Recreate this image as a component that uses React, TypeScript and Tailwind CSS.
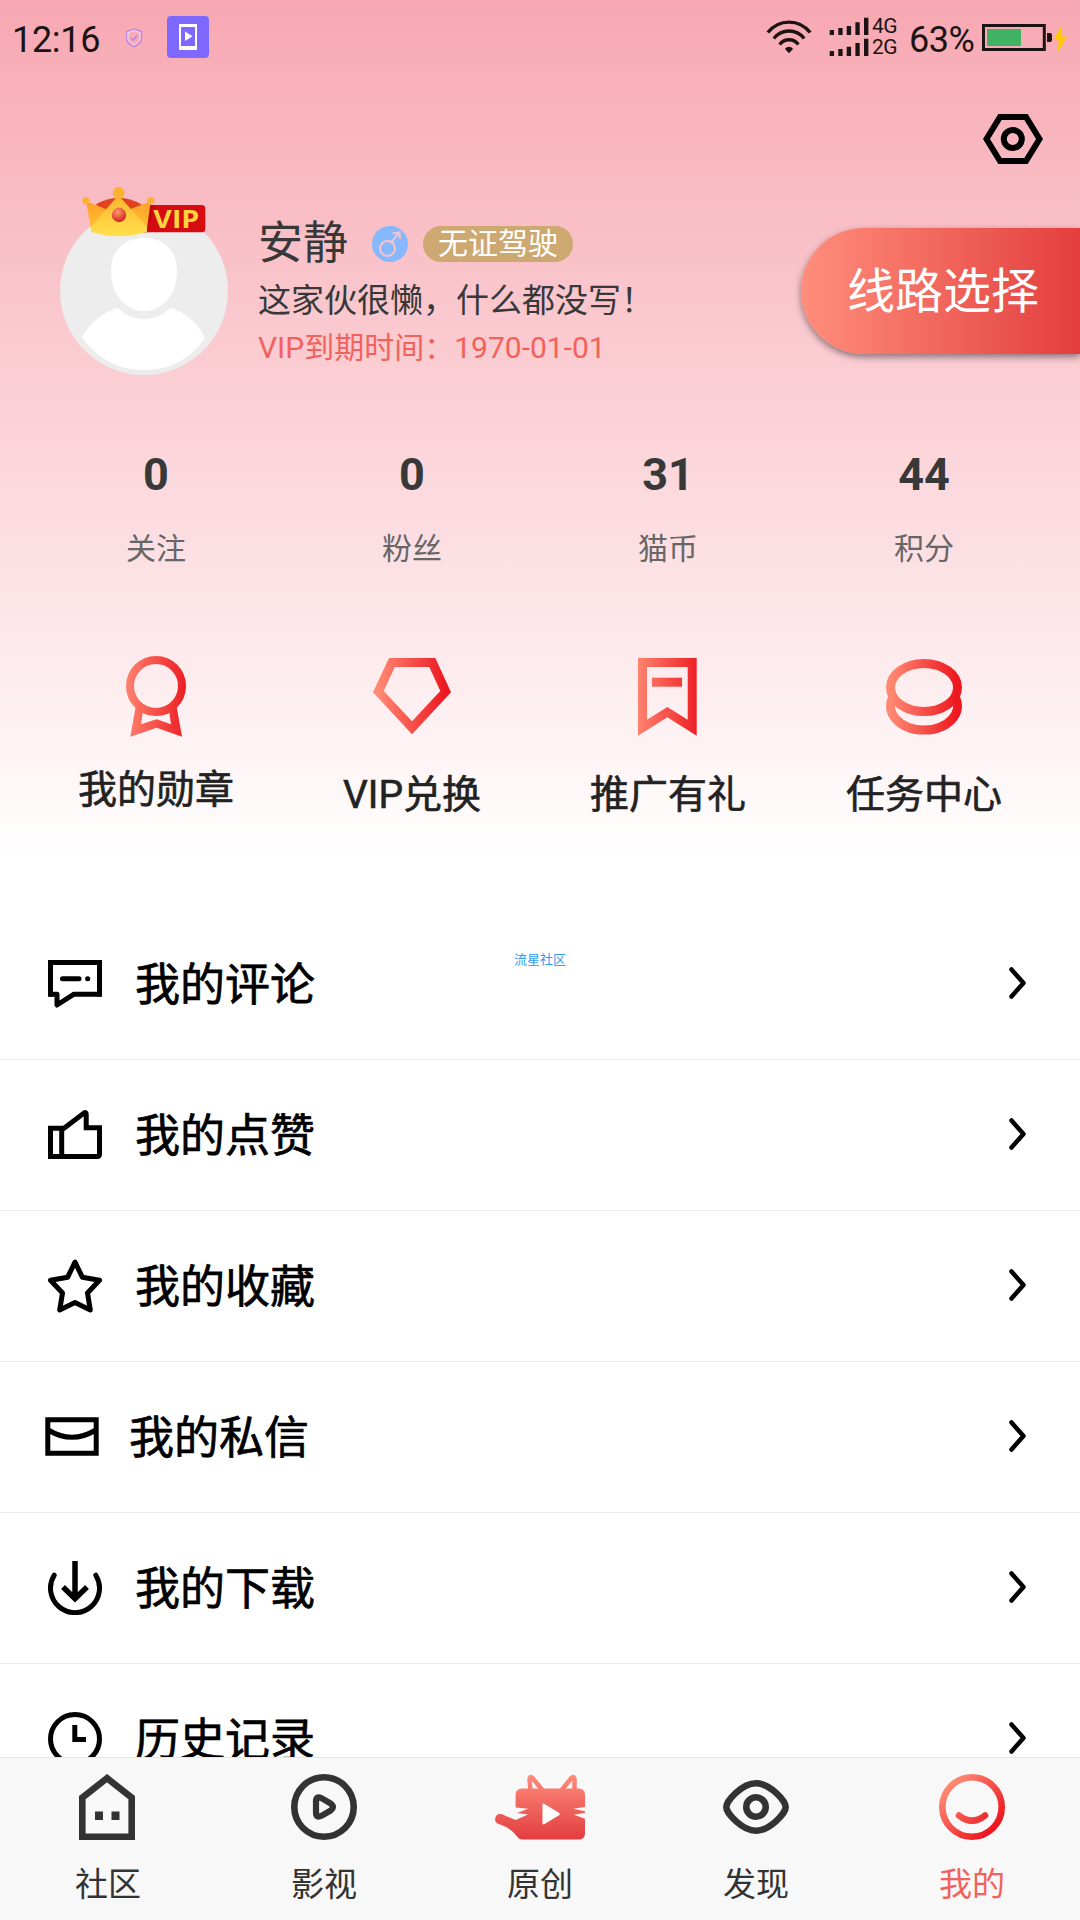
import type { ReactNode } from "react";

function StatusBar() {
  return (
    <div className="flex h-[60px] text-[#1c1414]">
      <div className="ml-[12px] w-[114px] text-[36px] leading-[80px] tracking-[-0.3px]">12:16</div>
      <svg className="h-[60px] w-[83px]" viewBox="126 0 83 60" fill="none">
        <path d="M134 29l7.5 2.6v7.2c0 3.4-3.6 6.2-7.5 8-3.9-1.8-7.5-4.6-7.5-8v-7.2z" stroke="#c58ae0" strokeWidth="1.6" />
        <path d="M134 30.500l6 2.200v5.800c0 2.600-2.800 5-6 6.500-3.200-1.500-6-3.900-6-6.500v-5.800z" stroke="#ecdcfa" strokeWidth="1" />
        <path d="M131 38l2.300 2.200 4-5" stroke="#b48ae8" strokeWidth="1.500" />
        <rect x="167" y="16" width="42" height="42" rx="4" fill="#7f68ff" />
        <path d="M179 24h18v26h-18zM181 27v19h14V27z" fill="#fff" fillRule="evenodd" />
        <path d="M185 31.500v9.500l7.500-4.700z" fill="#fff" />
      </svg>
      <svg className="ml-auto h-[60px] w-[105px]" viewBox="766 0 105 60" fill="none">
        <g stroke="#1c1414" strokeWidth="3.400">
          <path d="M767.800 32.500C779 18.600 799 18.600 810.200 32.500" />
          <path d="M773.800 38.500c8-10 22.400-10 30.400 0" />
          <path d="M779.600 44.500c5-6.400 13.800-6.400 18.800 0" />
        </g>
        <path d="M785 49c2-3 6-3 8 0l-4 4.300z" fill="#1c1414" />
        <path
          d="M829.700 30h4.300v5h-4.300zM838.300 28h4.300v7h-4.300zM846.700 26h4.400v9h-4.400zM855.400 22.300h4.300V35h-4.300zM864 17.700h4.400V35H864zM829.700 51h4.300v5h-4.300zM838.300 49h4.300v7h-4.300zM846.700 46.700h4.400V56h-4.400zM855.400 43h4.300v13h-4.300zM864 38.700h4.400V56H864z"
          fill="#1c1414"
        />
      </svg>
      <div className="w-[38px] pt-[16px] pl-[1px] text-[21px] leading-[21px] tracking-[-0.5px]">
        <div>4G</div>
        <div>2G</div>
      </div>
      <div className="w-[72px] text-[36px] leading-[80px] tracking-[-0.5px]">63%</div>
      <svg className="mr-[12px] h-[60px] w-[87px]" viewBox="981 0 87 60">
        <rect x="983.500" y="25.500" width="60.800" height="24" fill="none" stroke="#1c1414" strokeWidth="3" />
        <rect x="987" y="29" width="34" height="17" fill="#40b264" />
        <path d="M1047 33h3q2 0 2 2v5q0 2-2 2h-3z" fill="#1c1414" />
        <path d="M1062 24.500l-8.500 15.500h5l-.500 12 9-15.500h-5z" fill="#ffc900" />
      </svg>
    </div>
  );
}

function Crown() {
  return (
    <svg className="absolute -top-[21px] left-[22px] h-[51px] w-[124px]" viewBox="126 48 372 153">
      <defs>
        <linearGradient id="gold" x1="0" y1="0" x2="0" y2="1">
          <stop offset="0" stopColor="#fbb32f" />
          <stop offset="1" stopColor="#ffe04c" />
        </linearGradient>
        <linearGradient id="side" x1="0" y1="0" x2="0" y2="1">
          <stop offset="0" stopColor="#ffa02a" />
          <stop offset="1" stopColor="#ffc233" />
        </linearGradient>
        <radialGradient id="gem" cx="0.4" cy="0.3" r="0.7">
          <stop offset="0" stopColor="#ff9a74" />
          <stop offset="1" stopColor="#cf2317" />
        </radialGradient>
      </defs>
      <path d="M300 105h185q11 0 11 11v60q0 11-11 11H300z" fill="#d60d10" />
      <path d="M318 105h32l-28 82h-10z" fill="#b50409" opacity="0.5" />
      <path d="M168 103q68-40 136 0l-30 35h-76z" fill="#e0431d" />
      <path d="M138 94l58 22 39 60-81 6zM332 94l-58 22-39 60 85 6z" fill="url(#side)" />
      <path d="M235 76L153 170v15q84 27 168 0v-15z" fill="url(#gold)" />
      <circle cx="236" cy="68" r="17.500" fill="#fbb32f" />
      <circle cx="138" cy="92" r="11" fill="#fbb32f" />
      <circle cx="332" cy="92" r="11" fill="#fbb32f" />
      <circle cx="237" cy="135" r="21.500" fill="url(#gem)" />
      <text x="340" y="175" textLength="138" lengthAdjust="spacingAndGlyphs" fontSize="74" fontWeight="700" fontFamily="Open Sans, sans-serif" fill="#ffd43f">
        VIP
      </text>
    </svg>
  );
}

function Profile() {
  return (
    <div className="mt-[43px] flex h-[168px] pl-[60px]">
      <div className="relative h-[168px] w-[168px]">
        <svg className="h-[168px] w-[168px]" viewBox="0 0 168 168">
          <circle cx="84" cy="84" r="84" fill="#ededed" />
          <path d="M84 31c19 0 33 11 33 33 0 23-14 40-33 40S51 87 51 64c0-22 14-33 33-33z" fill="#fff" />
          <path d="M22 130C30 116 43 105 58 101q10 11 26 11t26-11c15 4 28 15 35 30-14 21-36 32-61 32s-47-11-62-33z" fill="#fff" />
        </svg>
        <Crown />
      </div>
      <div className="ml-[30px] pt-[10px]">
        <div className="flex h-[54px] items-center">
          <span className="text-[45px] text-[#383838]">安静</span>
          <svg className="ml-[24px] h-[36px] w-[36px]" viewBox="0 0 36 36">
            <circle cx="18" cy="18" r="18" fill="#85b8ff" />
            <g fill="none" stroke="#f9c3ca" strokeWidth="2">
              <circle cx="15.500" cy="22.500" r="7.500" />
              <path d="M19.500 16L27.500 6.500M20.500 7.500l7-1 .5 6.500" />
            </g>
          </svg>
          <span className="ml-[15px] h-[36px] rounded-full bg-[#cda870] px-[15px] text-[30px] leading-[36px] text-white">无证驾驶</span>
        </div>
        <div className="mt-[6px] text-[33px] leading-[48px] text-[#383838]">这家伙很懒，什么都没写！</div>
        <div className="text-[30px] leading-[46px] text-[#f2625a]">VIP到期时间：1970-01-01</div>
      </div>
      <button className="mt-[21px] ml-auto h-[126px] w-[279px] rounded-l-full bg-linear-to-r/srgb from-[#ff8e7c] to-[#e33e3e] pl-[46px] text-left text-[48px] leading-[125px] text-white shadow-[0_3px_7px_rgba(0,0,0,0.45)]">
        线路选择
      </button>
    </div>
  );
}

const stats = [
  { value: 0, label: "关注" },
  { value: 0, label: "粉丝" },
  { value: 31, label: "猫币" },
  { value: 44, label: "积分" },
];

const actions: { label: string; icon: ReactNode }[] = [
  {
    label: "我的勋章",
    icon: (
      <>
        <circle cx="41" cy="30" r="26" fill="none" stroke="url(#red)" strokeWidth="8" />
        <path
          fillRule="evenodd"
          d="M21 49l-5.700 31.700 26.400-9L67 80.700 61.300 49Q41 64 21 49zM27.700 56.700L26 68.300l15.700-5L56 68.300l-1.700-11.600Q41 62 27.700 56.700z"
        />
      </>
    ),
  },
  {
    label: "VIP兑换",
    icon: <path fillRule="evenodd" d="M18 2h46.300L80 36.300l-39 42-39-42zM23.700 11l-11 24L41 65.300 69.300 35l-11-24z" />,
  },
  {
    label: "推广有礼",
    icon: (
      <>
        <path fillRule="evenodd" d="M11 2h58.700v77.700L40.300 61.300 11 79.700zM20 11v52.700L40.300 51l20.400 12.700V11z" />
        <path d="M25 21.700h30v9H25z" />
      </>
    ),
  },
  {
    label: "任务中心",
    icon: (
      <g fill="none" stroke="url(#red)" strokeWidth="9">
        <ellipse cx="41" cy="31.500" rx="33.500" ry="24" />
        <path d="M10.100 40.750A33.500 24 0 1 0 71.900 40.750" />
      </g>
    ),
  },
];

const menu: { label: string; icon: ReactNode }[] = [
  {
    label: "我的评论",
    icon: (
      <>
        <path d="M2.500 5.500h49v31.700H26L9 48V37.200H2.500z" strokeLinejoin="round" />
        <path d="M0 3h54v5H0zM0 3h5v36.700H0zM49 3h5v36.700h-5z" fill="#000" stroke="none" />
        <path d="M14.500 21.700H31M39.600 21.700h.2" strokeLinecap="round" />
      </>
    ),
  },
  {
    label: "我的点赞",
    icon: (
      <>
        <path d="M2.500 20.200H16L36 5q2.200-1.200 2.200 1.300v13.500h13.300V46q0 2.500-2.500 2.500H2.500z" />
        <path d="M13.700 20v28" />
      </>
    ),
  },
  {
    label: "我的收藏",
    icon: <path d="M27 3l7.300 15.200 17.200 3L39.500 34l2.800 17L27 43.500 11.700 51l2.800-17-12-12.800 17.200-3z" strokeLinejoin="round" />,
  },
  {
    label: "我的私信",
    icon: <path d="M2.800 9.800h48.400v33.400H2.800zM3.300 20Q27 34.600 50.700 20" />,
  },
  {
    label: "我的下载",
    icon: (
      <>
        <path d="M6.200 14.200a24.500 24.500 0 1 0 41.600 0" strokeLinecap="round" />
        <path d="M27 0v36M15 26l12 11.700L39 26" strokeWidth="5.500" />
      </>
    ),
  },
  {
    label: "历史记录",
    icon: (
      <>
        <circle cx="27" cy="27" r="24.500" />
        <path d="M26.800 13v14.500H38" />
      </>
    ),
  },
];

const tabs: { label: string; icon: ReactNode }[] = [
  {
    label: "社区",
    icon: (
      <>
        <path d="M44 4.200l24.700 19.400v39.100H19.300V23.600z" />
        <path d="M32 37.500h8V46h-8zM48.500 37.500h8V46h-8z" fill="#333" stroke="none" />
      </>
    ),
  },
  {
    label: "影视",
    icon: (
      <>
        <circle cx="45" cy="33" r="29.700" />
        <path d="M37 27.500q0-6 5.500-3.300l9.300 5.500q4.400 3.300 0 6.600l-9.300 5.500Q37 44.500 37 38.500z" strokeWidth="6.200" />
      </>
    ),
  },
  {
    label: "原创",
    icon: (
      <>
        <path d="M35.500 17L34.500 5q.7-3.500 3.200-1L48 17M66 17L76.300 4q2.500-2.500 3.200 1L79.500 17" stroke="url(#cat)" strokeWidth="4.500" />
        <path
          d="M20.600 33.500V21q0-6.500 6.500-6.500h56.500q6.400 0 6.400 6.500v12l-12 1.800 12 2.400v1.500l-11 2.100 11 4V59q0 6.600-6.400 6.600H27q-2.500 0-4.500-2.600Q16 55 10 52.500L2.500 49.500Q0 48 0 45.500q1-6.500 7-5.200L20.600 46l12.500-5.500-11-1.500 11-4.300z"
          fill="url(#cat)"
          stroke="none"
        />
        <path d="M47.500 31q0-2.200 2-1l14.500 8.700q1.800 1.300 0 2.600L49.500 50q-2 1.200-2-1z" fill="#fff" stroke="none" />
      </>
    ),
  },
  {
    label: "发现",
    icon: (
      <>
        <path d="M15.300 33C15.300 27 31 9.300 45 9.300S74.700 27 74.700 33 59 56.700 45 56.700 15.300 39 15.300 33z" />
        <circle cx="45" cy="33" r="9.700" />
      </>
    ),
  },
  {
    label: "我的",
    icon: (
      <g stroke="url(#me)">
        <circle cx="45" cy="33" r="29.700" />
        <path d="M32 41.500q13 10.400 26 0" strokeLinecap="round" />
      </g>
    ),
  },
];

function MenuRow({ label, icon }: { label: string; icon: ReactNode }) {
  const inset = label === "我的私信";
  return (
    <div className={`flex h-[151px] shrink-0 items-center border-b border-[#ececec] pr-[52px] ${inset ? "gap-[30px] pl-[45px]" : "gap-[33px] pl-[48px]"}`}>
      <svg className="h-[54px] w-[54px]" viewBox="0 0 54 54" fill="none" stroke="#000" strokeWidth="5">
        {icon}
      </svg>
      <span className="pt-[3px] text-[45px] leading-[54px] text-black [-webkit-text-stroke:0.7px]">{label}</span>
      <svg className="mb-[2px] ml-auto h-[34px] w-[19px]" viewBox="0 0 19 34" fill="none" stroke="#000" strokeWidth="4.500" strokeLinecap="round" strokeLinejoin="round">
        <path d="M2.500 3.500L14.500 17l-12 13.500" />
      </svg>
    </div>
  );
}

function App() {
  return (
    <div className="relative flex h-[1920px] w-[1080px] flex-col overflow-hidden bg-white font-[Roboto,'Noto_Sans_CJK_SC',sans-serif]">
      {/* shared gradients */}
      <svg className="absolute h-0 w-0">
        <defs>
          <linearGradient id="red" gradientUnits="userSpaceOnUse" x1="8" y1="0" x2="74" y2="0">
            <stop offset="0" stopColor="#ff8872" />
            <stop offset="1" stopColor="#ed1820" />
          </linearGradient>
          <linearGradient id="cat" gradientUnits="userSpaceOnUse" x1="0" y1="0" x2="0" y2="66">
            <stop offset="0" stopColor="#ff8d7c" />
            <stop offset="1" stopColor="#e23c3f" />
          </linearGradient>
          <linearGradient id="me" gradientUnits="userSpaceOnUse" x1="22" y1="12" x2="66" y2="54">
            <stop offset="0" stopColor="#ff8872" />
            <stop offset="1" stopColor="#ed1820" />
          </linearGradient>
        </defs>
      </svg>

      <header className="h-[909px] shrink-0 bg-linear-to-b/srgb from-[#f7a8b2] to-white to-[865px]">
        <StatusBar />
        <div className="mt-[54px] flex justify-end pr-[37px]">
          <svg className="h-[50px] w-[60px]" viewBox="0 0 60 50" fill="none" stroke="#000" strokeWidth="6">
            <path d="M17 3h26l13.500 22L43 47H17L3.500 25z" />
            <circle cx="29.800" cy="25" r="9" />
          </svg>
        </div>
        <Profile />
        <div className="mt-[73px] grid grid-cols-4 px-[28px] text-center">
          {stats.map((s) => (
            <div key={s.label}>
              <div className="text-[45px] leading-[54px] font-bold text-[#383838]">{s.value}</div>
              <div className="mt-[25px] text-[30px] leading-[44px] text-[#666]">{s.label}</div>
            </div>
          ))}
        </div>
        <div className="mt-[85px] grid grid-cols-4 px-[28px]">
          {actions.map((a, i) => (
            <div key={a.label} className="flex flex-col items-center">
              <svg className="h-[82px] w-[82px]" viewBox="0 0 82 82" fill="url(#red)">
                {a.icon}
              </svg>
              <div className={`text-[39px] leading-[54px] text-[#222] [-webkit-text-stroke:0.6px] ${i === 0 ? "mt-[25px]" : "mt-[30px]"}`}>{a.label}</div>
            </div>
          ))}
        </div>
      </header>

      <main className="flex min-h-0 flex-1 flex-col overflow-hidden">
        {menu.map((m) => (
          <MenuRow key={m.label} {...m} />
        ))}
      </main>

      <nav className="grid h-[163px] shrink-0 grid-cols-5 border-t border-[#e6e6e6] bg-[#f8f8f8]">
        {tabs.map((t) => (
          <div key={t.label} className="flex flex-col items-center pt-[16px]">
            <svg className="h-[66px] w-[90px]" viewBox="0 0 90 66" fill="none" stroke="#333" strokeWidth="6.600">
              {t.icon}
            </svg>
            <div className={`mt-[23px] text-[33px] leading-[44px] ${t.label === "我的" ? "text-[#f2625a]" : "text-[#333]"}`}>{t.label}</div>
          </div>
        ))}
      </nav>

      <div className="absolute top-[951px] left-[514px] text-[13px] leading-[18px] text-[#2f9df4]">流星社区</div>
    </div>
  );
}

export default App;
